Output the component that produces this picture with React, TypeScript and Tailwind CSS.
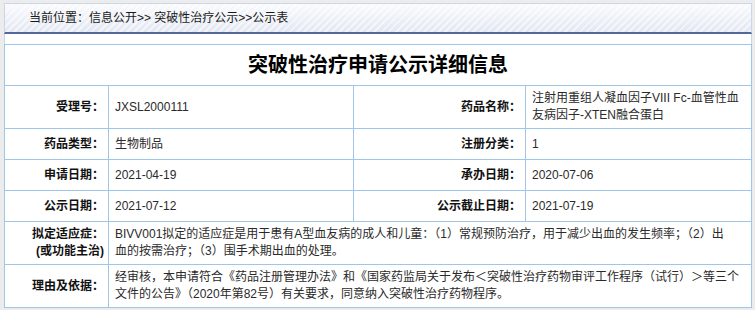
const rows: { l1: string; v1: React.ReactNode; l2: string; v2: React.ReactNode; h: string }[] = [
  {
    l1: '受理号：',
    v1: 'JXSL2000111',
    l2: '药品名称：',
    v2: '注射用重组人凝血因子VIII Fc-血管性血友病因子-XTEN融合蛋白',
    h: 'h-[43px]',
  },
  { l1: '药品类型：', v1: '生物制品', l2: '注册分类：', v2: '1', h: 'h-[31px]' },
  { l1: '申请日期：', v1: '2021-04-19', l2: '承办日期：', v2: '2020-07-06', h: 'h-[31px]' },
  { l1: '公示日期：', v1: '2021-07-12', l2: '公示截止日期：', v2: '2021-07-19', h: 'h-[31px]' },
]

const labelCls = 'border border-[#9fc5e8] pr-[4px] text-right font-bold text-[#111]'
const valueCls = 'border border-[#9fc5e8] pl-[6px] text-left text-[#2a2a2a] leading-[17px]'

export default function App() {
  return (
    <div className="h-[310px] w-[755px] overflow-hidden bg-[#ececec] pl-[4px] pr-[3px] pt-[3px] font-['Liberation_Sans','Noto_Sans_CJK_SC',sans-serif] text-[12px]">
      {/* breadcrumb bar */}
      <div className="flex h-[31px] items-center border border-b-2 border-[#cbd6e8] border-b-[#55689b] bg-[repeating-linear-gradient(135deg,rgba(255,255,255,0.55)_0px,rgba(255,255,255,0.55)_2px,transparent_2px,transparent_5px),linear-gradient(to_bottom,#f9fafd,#e2e7f2)] pl-[24px] text-[#1a1a1a]">
        当前位置：信息公开&gt;&gt; 突破性治疗公示&gt;&gt;公示表
      </div>
      <div className="h-[10px] border-x border-[#cbd6e8] bg-white" />

      <table className="w-full table-fixed border-collapse bg-white">
        <colgroup>
          <col className="w-[104px]" />
          <col className="w-[245px]" />
          <col className="w-[172px]" />
          <col />
        </colgroup>
        <tbody>
          <tr>
            <td colSpan={4} className="h-[41px] border border-[#9fc5e8] text-center text-[20px] font-bold text-black">
              突破性治疗申请公示详细信息
            </td>
          </tr>
          {rows.map((r) => (
            <tr key={r.l1}>
              <td className={`${r.h} ${labelCls}`}>{r.l1}</td>
              <td className={`${valueCls} pr-[8px]`}>{r.v1}</td>
              <td className={labelCls}>{r.l2}</td>
              <td className={`${valueCls} pr-[8px]`}>{r.v2}</td>
            </tr>
          ))}
          <tr>
            <td className={`h-[43px] ${labelCls} leading-[17px]`}>
              拟定适应症：
              <br />
              (或功能主治)
            </td>
            <td colSpan={3} className={`${valueCls} pr-[22px]`}>
              BIVV001拟定的适应症是用于患有A型血友病的成人和儿童：（1）常规预防治疗，用于减少出血的发生频率；（2）出血的按需治疗；（3）围手术期出血的处理。
            </td>
          </tr>
          <tr>
            <td className={`h-[43px] ${labelCls}`}>理由及依据：</td>
            <td colSpan={3} className={`${valueCls} pr-[8px]`}>
              经审核，本申请符合《药品注册管理办法》和《国家药监局关于发布＜突破性治疗药物审评工作程序（试行）＞等三个文件的公告》（2020年第82号）有关要求，同意纳入突破性治疗药物程序。
            </td>
          </tr>
        </tbody>
      </table>
    </div>
  )
}
